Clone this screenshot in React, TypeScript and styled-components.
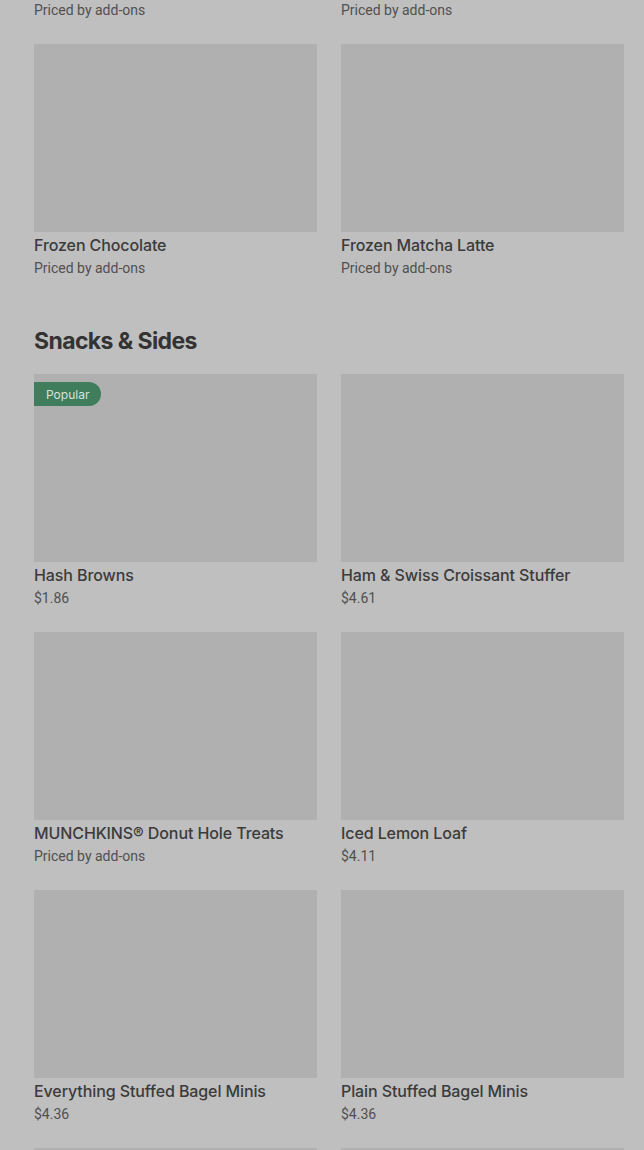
import React from "react";
import styled, { createGlobalStyle } from "styled-components";

const Global = createGlobalStyle`
  html, body { margin: 0; padding: 0; background: #bfbfbf; }
  body { font-family: Inter, "Noto Sans", Arial, sans-serif; overflow: hidden; }
`;

const Page = styled.div`
  width: 644px;
  height: 1150px;
  overflow: hidden;
  background: #bfbfbf;
`;

const Content = styled.div`
  margin-top: -214px;
  padding: 0 20px 0 34px;
`;

const Section = styled.section`
  display: flex;
  flex-direction: column;
`;

const Heading = styled.h2`
  margin: 47px 0 17px;
  font-size: 23px;
  line-height: 32px;
  font-weight: 700;
  letter-spacing: -0.6px;
  color: #333;
`;

const Grid = styled.div`
  display: grid;
  grid-template-columns: 283px 283px;
  column-gap: 24px;
  row-gap: 24px;
`;

const Card = styled.div`
  display: flex;
  flex-direction: column;
`;

const Thumb = styled.div`
  position: relative;
  height: 188px;
  background: #b0b0b0;
`;

const Badge = styled.span`
  position: absolute;
  top: 8px;
  left: 0;
  height: 24px;
  padding: 0 12px;
  display: flex;
  align-items: center;
  background: #3f7d5d;
  color: #d6e3dc;
  font-size: 12px;
  border-radius: 0 12px 12px 0;
`;

const Title = styled.div`
  margin-top: 3px;
  font-size: 16px;
  line-height: 20px;
  font-weight: 500;
  letter-spacing: -0.1px;
  color: #3b3b3b;
`;

const Price = styled.div`
  margin-top: 3px;
  font-family: Roboto, Arial, sans-serif;
  font-size: 14px;
  line-height: 20px;
  color: #505050;
`;

type Item = { name: string; price: string; popular?: boolean };

const drinks: Item[] = [
  { name: "Frozen Coffee", price: "Priced by add-ons" },
  { name: "Frozen Dunkaccino", price: "Priced by add-ons" },
  { name: "Frozen Chocolate", price: "Priced by add-ons" },
  { name: "Frozen Matcha Latte", price: "Priced by add-ons" },
];

const snacks: Item[] = [
  { name: "Hash Browns", price: "$1.86", popular: true },
  { name: "Ham & Swiss Croissant Stuffer", price: "$4.61" },
  { name: "MUNCHKINS® Donut Hole Treats", price: "Priced by add-ons" },
  { name: "Iced Lemon Loaf", price: "$4.11" },
  { name: "Everything Stuffed Bagel Minis", price: "$4.36" },
  { name: "Plain Stuffed Bagel Minis", price: "$4.36" },
  { name: "Bacon, Egg & Cheese Wake-Up Wrap", price: "$3.11" },
  { name: "Sausage, Egg & Cheese Wake-Up Wrap", price: "$3.11" },
];

const ItemCard = ({ item }: { item: Item }) => (
  <Card>
    <Thumb>{item.popular && <Badge>Popular</Badge>}</Thumb>
    <Title>{item.name}</Title>
    <Price>{item.price}</Price>
  </Card>
);

export default function App() {
  return (
    <Page>
      <Global />
      <Content>
        <Section>
          <Grid>
            {drinks.map((d) => (
              <ItemCard key={d.name} item={d} />
            ))}
          </Grid>
        </Section>
        <Section>
          <Heading>Snacks &amp; Sides</Heading>
          <Grid>
            {snacks.map((d) => (
              <ItemCard key={d.name} item={d} />
            ))}
          </Grid>
        </Section>
      </Content>
    </Page>
  );
}
